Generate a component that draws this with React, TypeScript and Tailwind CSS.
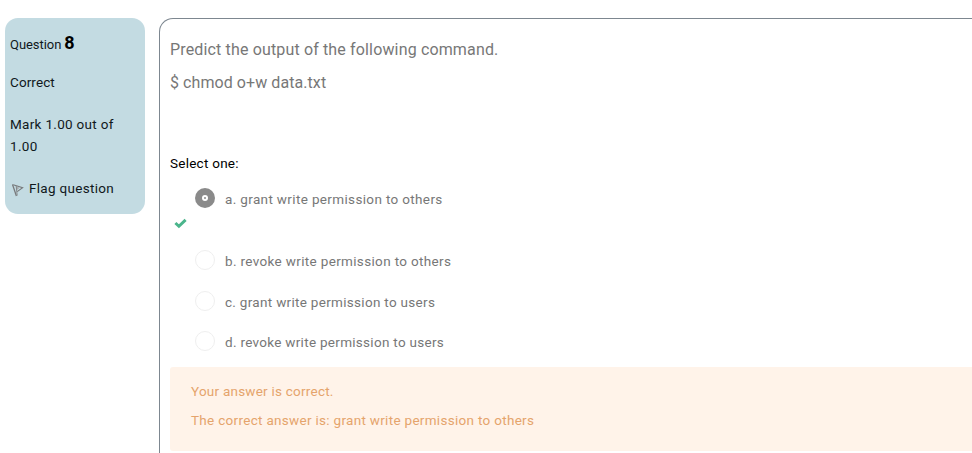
const options = [
  { label: "a. grant write permission to others", row: "h-[22px]", text: "tracking-[0.35px]", checked: true },
  { label: "b. revoke write permission to others", row: "h-[22px] mt-10", text: "tracking-[0.34px]", checked: false },
  { label: "c. grant write permission to users", row: "h-[22px] mt-[19px]", text: "tracking-[0.3px]", checked: false },
  { label: "d. revoke write permission to users", row: "h-[22px] mt-[18px]", text: "tracking-[0.29px]", checked: false },
];

function Radio({ checked }: { checked: boolean }) {
  return checked ? (
    <span className="flex size-5 shrink-0 items-center justify-center rounded-full bg-[#8a8a8a]">
      <span className="flex size-1.5 items-center justify-center rounded-full bg-white">
        <span className="size-0.5 rounded-full bg-[#8a8a8a]" />
      </span>
    </span>
  ) : (
    <span className="size-5 shrink-0 rounded-full border border-[#efefef] bg-white" />
  );
}

function FlagIcon() {
  return (
    <svg className="mt-1" width="13" height="14" viewBox="0 0 13 14" fill="none">
      <path d="M0.5 1.4 L4.4 13" stroke="#77797b" strokeWidth="1.3" />
      <path d="M1.2 1.8 L10.6 4.7 L5.2 8.6" stroke="#77797b" strokeWidth="1.1" />
      <path d="M4 3.4 L7.6 4.8 L5 7 Z" fill="#a5aaac" />
      <path d="M4.2 3 L5.2 12.6" stroke="#85888a" />
    </svg>
  );
}

function CheckMark() {
  return (
    <svg className="absolute left-1 top-[31px]" width="13" height="11" viewBox="0 0 13 11" fill="none">
      <path d="M1.4 5 L4.9 8.3 L11.6 1.9" stroke="#4bb58c" strokeWidth="2.9" />
    </svg>
  );
}

export default function App() {
  return (
    <div className="flex h-[453px] w-[972px] overflow-hidden bg-white pl-[5px] pt-[18px] font-['Roboto','Open_Sans',sans-serif] text-[13.5px] leading-[22px]">
      <aside className="h-[196px] w-[140px] shrink-0 whitespace-nowrap rounded-[13px] bg-[#c3dbe2] pl-[5px] pt-[14px] tracking-[0.3px] text-[#10181c]">
        <h3 className="flex h-[22px] items-baseline gap-[3px] tracking-normal">
          <span className="text-[13px] tracking-[-0.05px]">Question</span>
          <span className="text-lg font-bold leading-[22px] text-black">8</span>
        </h3>
        <div className="mt-[17px] tracking-[0.1px]">Correct</div>
        <div className="mt-5">
          Mark 1.00 out of
          <br />
          1.00
        </div>
        <div className="mt-5 flex items-center gap-1 pl-0.5">
          <FlagIcon />
          <span>Flag question</span>
        </div>
      </aside>
      <main className="ml-[14px] h-[460px] w-[830px] shrink-0 whitespace-nowrap rounded-tl-[14px] border-l border-t border-[#7d8790] pl-2.5 pt-[19px] text-[#777]">
        <p className="h-[24px] text-base leading-6 tracking-[0.15px]">Predict the output of the following command.</p>
        <p className="mt-[9px] h-[24px] text-base leading-6 tracking-[0.07px]">$ chmod o+w data.txt</p>
        <div className="mt-[57px] tracking-[0.25px] text-black">Select one:</div>
        <div className="relative mt-[13px] pl-[25px]">
          {options.map((o) => (
            <label key={o.label} className={`flex items-center gap-2.5 ${o.row}`}>
              <Radio checked={o.checked} />
              <span className={`pt-0.5 ${o.text}`}>{o.label}</span>
            </label>
          ))}
          <CheckMark />
        </div>
        <section className="mt-[15px] h-[84px] rounded-[3px] bg-[#fff3e9] pl-[21px] pt-[13px] text-[#e5a46c]">
          <p className="tracking-[0.23px]">Your answer is correct.</p>
          <p className="mt-[7px] tracking-[0.3px]">The correct answer is: grant write permission to others</p>
        </section>
      </main>
    </div>
  );
}
